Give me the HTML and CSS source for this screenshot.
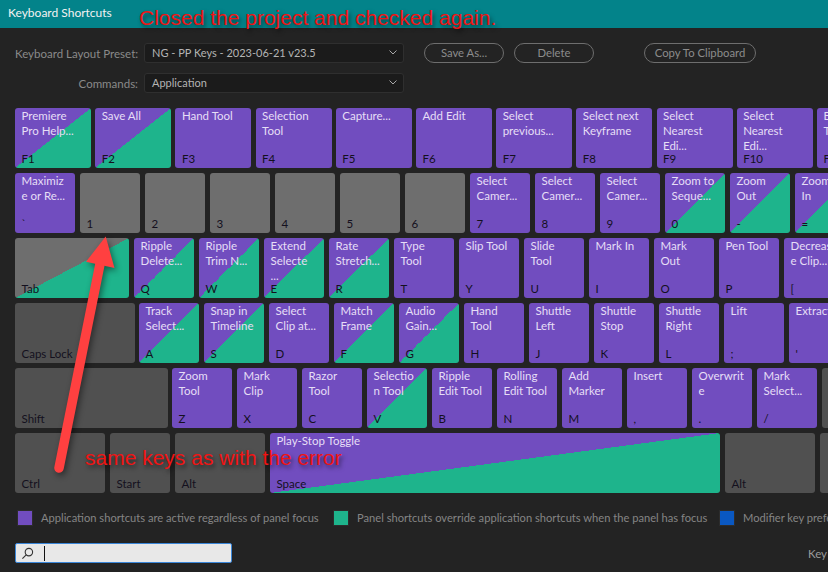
FILE: index.html
```html
<!DOCTYPE html>
<html lang="en">
<head>
<meta charset="utf-8">
<title>Keyboard Shortcuts</title>
<link rel="stylesheet" href="styles.css">
</head>
<body>
<div class="app">
  <header class="titlebar">Keyboard Shortcuts</header>
  <main class="panel">
    <div class="controls">
      <div class="selects">
        <div class="field"><label class="field-label">Keyboard Layout Preset:</label><div class="select">NG - PP Keys - 2023-06-21 v23.5<svg class="chev" viewBox="0 0 8 5"><path d="M.5 .5 4 4 7.5 .5"/></svg></div></div>
        <div class="field"><label class="field-label">Commands:</label><div class="select">Application<svg class="chev" viewBox="0 0 8 5"><path d="M.5 .5 4 4 7.5 .5"/></svg></div></div>
      </div>
      <div class="actions">
        <button class="btn w80">Save As...</button>
        <button class="btn w80">Delete</button>
        <button class="btn copy">Copy To Clipboard</button>
      </div>
    </div>

    <div class="keyboard">
      <div class="row fn">
        <div class="key wf both"><span class="name">Premiere<br>Pro Help...</span><span class="code">F1</span></div>
        <div class="key wf both"><span class="name">Save All</span><span class="code">F2</span></div>
        <div class="key wf app-k"><span class="name">Hand Tool</span><span class="code">F3</span></div>
        <div class="key wf app-k"><span class="name">Selection<br>Tool</span><span class="code">F4</span></div>
        <div class="key wf app-k"><span class="name">Capture...</span><span class="code">F5</span></div>
        <div class="key wf app-k"><span class="name">Add Edit</span><span class="code">F6</span></div>
        <div class="key wf app-k"><span class="name">Select<br>previous...</span><span class="code">F7</span></div>
        <div class="key wf app-k"><span class="name">Select next<br>Keyframe</span><span class="code">F8</span></div>
        <div class="key wf app-k"><span class="name">Select<br>Nearest<br>Edi...</span><span class="code">F9</span></div>
        <div class="key wf app-k"><span class="name">Select<br>Nearest<br>Edi...</span><span class="code">F10</span></div>
        <div class="key wf app-k"><span class="name">Edit<br>Tool</span><span class="code">F11</span></div>
      </div>
      <div class="row">
        <div class="key w60 app-k"><span class="name">Maximiz<br>e or Re...</span><span class="code">`</span></div>
        <div class="key w60 free"><span class="code">1</span></div>
        <div class="key w60 free"><span class="code">2</span></div>
        <div class="key w60 free"><span class="code">3</span></div>
        <div class="key w60 free"><span class="code">4</span></div>
        <div class="key w60 free"><span class="code">5</span></div>
        <div class="key w60 free"><span class="code">6</span></div>
        <div class="key w60 app-k"><span class="name">Select<br>Camer...</span><span class="code">7</span></div>
        <div class="key w60 app-k"><span class="name">Select<br>Camer...</span><span class="code">8</span></div>
        <div class="key w60 app-k"><span class="name">Select<br>Camer...</span><span class="code">9</span></div>
        <div class="key w60 both"><span class="name">Zoom to<br>Seque...</span><span class="code">0</span></div>
        <div class="key w60 both"><span class="name">Zoom<br>Out</span><span class="code">-</span></div>
        <div class="key w60 both"><span class="name">Zoom<br>In</span><span class="code">=</span></div>
      </div>
      <div class="row">
        <div class="key w114 free-panel"><span class="code">Tab</span></div>
        <div class="key w60 both"><span class="name">Ripple<br>Delete...</span><span class="code">Q</span></div>
        <div class="key w60 both"><span class="name">Ripple<br>Trim N...</span><span class="code">W</span></div>
        <div class="key w60 both"><span class="name">Extend<br>Selecte<br>...</span><span class="code">E</span></div>
        <div class="key w60 both"><span class="name">Rate<br>Stretch...</span><span class="code">R</span></div>
        <div class="key w60 app-k"><span class="name">Type<br>Tool</span><span class="code">T</span></div>
        <div class="key w60 app-k"><span class="name">Slip Tool</span><span class="code">Y</span></div>
        <div class="key w60 app-k"><span class="name">Slide<br>Tool</span><span class="code">U</span></div>
        <div class="key w60 app-k"><span class="name">Mark In</span><span class="code">I</span></div>
        <div class="key w60 app-k"><span class="name">Mark<br>Out</span><span class="code">O</span></div>
        <div class="key w60 app-k"><span class="name">Pen Tool</span><span class="code">P</span></div>
        <div class="key w60 app-k"><span class="name">Decreas<br>e Clip...</span><span class="code">[</span></div>
      </div>
      <div class="row">
        <div class="key w120 mod"><span class="code">Caps Lock</span></div>
        <div class="key w60 both"><span class="name">Track<br>Select...</span><span class="code">A</span></div>
        <div class="key w60 both"><span class="name">Snap in<br>Timeline</span><span class="code">S</span></div>
        <div class="key w60 app-k"><span class="name">Select<br>Clip at...</span><span class="code">D</span></div>
        <div class="key w60 both"><span class="name">Match<br>Frame</span><span class="code">F</span></div>
        <div class="key w60 both"><span class="name">Audio<br>Gain...</span><span class="code">G</span></div>
        <div class="key w60 app-k"><span class="name">Hand<br>Tool</span><span class="code">H</span></div>
        <div class="key w60 app-k"><span class="name">Shuttle<br>Left</span><span class="code">J</span></div>
        <div class="key w60 app-k"><span class="name">Shuttle<br>Stop</span><span class="code">K</span></div>
        <div class="key w60 app-k"><span class="name">Shuttle<br>Right</span><span class="code">L</span></div>
        <div class="key w60 app-k"><span class="name">Lift</span><span class="code">;</span></div>
        <div class="key w60 app-k"><span class="name">Extract</span><span class="code">'</span></div>
      </div>
      <div class="row">
        <div class="key w153 mod"><span class="code">Shift</span></div>
        <div class="key w60 app-k"><span class="name">Zoom<br>Tool</span><span class="code">Z</span></div>
        <div class="key w60 app-k"><span class="name">Mark<br>Clip</span><span class="code">X</span></div>
        <div class="key w60 app-k"><span class="name">Razor<br>Tool</span><span class="code">C</span></div>
        <div class="key w60 both"><span class="name">Selectio<br>n Tool</span><span class="code">V</span></div>
        <div class="key w60 app-k"><span class="name">Ripple<br>Edit Tool</span><span class="code">B</span></div>
        <div class="key w60 app-k"><span class="name">Rolling<br>Edit Tool</span><span class="code">N</span></div>
        <div class="key w60 app-k"><span class="name">Add<br>Marker</span><span class="code">M</span></div>
        <div class="key w60 app-k"><span class="name">Insert</span><span class="code">,</span></div>
        <div class="key w60 app-k"><span class="name">Overwrit<br>e</span><span class="code">.</span></div>
        <div class="key w60 app-k"><span class="name">Mark<br>Select...</span><span class="code">/</span></div>
        <div class="key w60 mod"></div>
      </div>
      <div class="row">
        <div class="key w90 mod"><span class="code">Ctrl</span></div>
        <div class="key w60 mod"><span class="code">Start</span></div>
        <div class="key w90 mod"><span class="code">Alt</span></div>
        <div class="key w450 both"><span class="name">Play-Stop Toggle</span><span class="code">Space</span></div>
        <div class="key w90 mod"><span class="code">Alt</span></div>
        <div class="key w60 mod"></div>
      </div>
    </div>

    <div class="legend">
      <div class="legend-item a"><span class="swatch s-app"></span><span class="legend-text">Application shortcuts are active regardless of panel focus</span></div>
      <div class="legend-item b"><span class="swatch s-panel"></span><span class="legend-text">Panel shortcuts override application shortcuts when the panel has focus</span></div>
      <div class="legend-item"><span class="swatch s-mod"></span><span class="legend-text">Modifier key preferences</span></div>
    </div>

    <div class="footer">
      <div class="search">
        <svg class="search-icon" viewBox="0 0 14 14"><circle cx="8.5" cy="5.5" r="4"/><path d="M5.6 8.4 1.5 12.5"/></svg>
        <span class="caret"></span>
      </div>
      <div class="footer-note">Key</div>
    </div>
  </main>

  <div class="note note-top">Closed the project and checked again.</div>
  <div class="note note-bottom">same keys as with the error</div>
  <svg class="arrow" viewBox="0 0 828 572">
    <path class="shaft" d="M59 468 100 264"/>
    <path class="head" d="M105.7 236.5 86 261.7 114.5 268Z"/>
  </svg>
</div>
</body>
</html>
```
FILE: styles.css
```css
* { box-sizing: border-box; }
html, body { margin: 0; padding: 0; background: #232323; }
body { width: 828px; height: 572px; overflow: hidden; }

.app {
  position: relative;
  width: 828px;
  height: 572px;
  overflow: hidden;
  background: #232323;
  font-family: Lato, "Noto Sans", sans-serif;
  font-size: 11.5px;
  color: #9a9a9a;
}

.titlebar {
  height: 28px;
  padding: 5px 0 0 8px;
  font-size: 12px;
  line-height: 16px;
  background: #03838a;
  color: #f2f2f2;
}

.panel { padding: 15px 0 0 15px; }

.controls { display: flex; }
.selects { display: flex; flex-direction: column; gap: 10px; }
.field { display: flex; align-items: center; }
.field-label { width: 123px; margin-right: 6px; text-align: right; color: #8a8a8a; white-space: nowrap; }
.select {
  position: relative;
  width: 260px;
  height: 20px;
  padding-left: 7px;
  font-size: 11px;
  line-height: 18px;
  background: #1b1b1b;
  border: 1px solid #2f2f2f;
  border-radius: 3px;
  color: #b4b4b4;
}
.chev {
  position: absolute;
  right: 6px;
  top: 6px;
  width: 8px;
  height: 5px;
  fill: none;
  stroke: #a8a8a8;
  stroke-width: 1;
}

.actions { display: flex; align-items: flex-start; margin-left: 20px; gap: 10px; }
.btn {
  height: 20px;
  padding: 0 0 2px;
  font: inherit;
  font-size: 11.3px;
  line-height: 15px;
  color: #8c8c8c;
  background: transparent;
  border: 1px solid #6e6e6e;
  border-radius: 10px;
}
.w80 { width: 80px; }
.copy { width: 112px; margin-left: 40px; }

.keyboard { display: flex; flex-direction: column; gap: 5px; margin-top: 15px; }
.row { display: flex; gap: 5px; }
.row.fn { gap: 4.2px; }

.key {
  flex: none;
  display: flex;
  flex-direction: column;
  height: 60px;
  padding: 0 0 2px 6.5px;
  border-radius: 3px;
  line-height: 15px;
  overflow: hidden;
  white-space: nowrap;
}
.wf { width: 76px; }
.w60 { width: 60px; }
.w90 { width: 90px; }
.w114 { width: 114px; }
.w120 { width: 120px; margin-right: -1px; }
.w153 { width: 153px; margin-right: -1px; }
.w450 { width: 450px; }

.name { display: block; height: 30px; color: #e6def6; }
.code { margin-top: auto; color: #14101e; }

.app-k { background: #714dbf; }
.both { background: linear-gradient(to bottom right, #714dbf 50%, #1eb48c 50%); }
.free { background: #6e6e6e; }
.free-panel { background: linear-gradient(to bottom right, #6e6e6e 50%, #1eb48c 50%); }
.mod { background: #505050; }

.legend { display: flex; align-items: center; margin: 17px 0 0 2px; white-space: nowrap; color: #858585; }
.legend-item { display: flex; align-items: center; flex: none; }
.legend-item.a { width: 316px; }
.legend-item.b { width: 386px; }
.legend-text { font-size: 11.15px; line-height: 14px; margin-top: -1px; }
.swatch { flex: none; width: 16px; height: 16px; margin-right: 8px; border: 1px solid #2c2c2c; }
.s-app { background: #714dbf; }
.s-panel { background: #1eb48c; }
.s-mod { background: #0a58c2; }

.footer { display: flex; align-items: center; margin-top: 17px; }
.search {
  display: flex;
  align-items: center;
  width: 217px;
  height: 20px;
  padding-left: 5px;
  background: #e8e8e8;
  border: 1px solid #3a86d8;
  border-radius: 2px;
}
.search-icon { width: 13px; height: 13px; fill: none; stroke: #333; stroke-width: 1.2; }
.caret { width: 1px; height: 15px; margin-left: 10px; background: #111; }
.footer-note { margin-left: 576px; white-space: nowrap; }

.note {
  position: absolute;
  font-family: "Liberation Sans", Arial, sans-serif;
  font-size: 21px;
  line-height: 24px;
  color: #f01414;
  white-space: nowrap;
  text-shadow: 2px 3px 4px rgba(0, 0, 0, .55);
}
.note-top { left: 139px; top: 6px; }
.note-bottom { left: 85px; top: 446px; }

.arrow {
  position: absolute;
  left: 0;
  top: 0;
  width: 828px;
  height: 572px;
  filter: drop-shadow(2px 3px 3px rgba(0, 0, 0, .45));
  pointer-events: none;
}
.shaft { fill: none; stroke: #ff4040; stroke-width: 9.5; stroke-linecap: round; }
.head { fill: #ff4040; }
```
